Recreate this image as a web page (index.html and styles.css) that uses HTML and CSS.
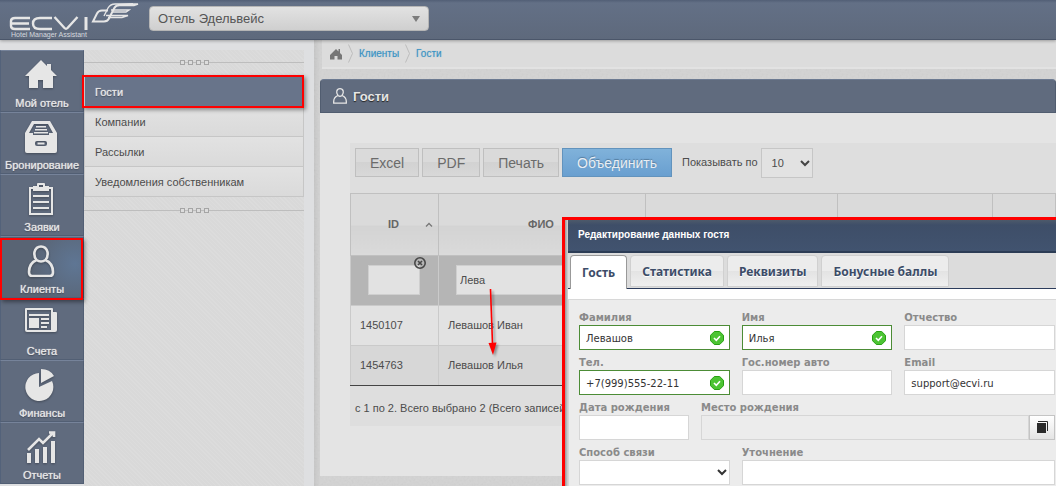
FILE: index.html
```html
<!DOCTYPE html>
<html lang="ru">
<head>
<meta charset="utf-8">
<title>ECVI – Гости</title>
<link rel="stylesheet" href="styles.css">
</head>
<body>
<header class="topbar">
  <a class="logo" href="#" aria-label="ECVI">
    <svg class="logo-mark" width="149" height="31" viewBox="0 0 149 31" fill="none" stroke="#e6e6e6" stroke-width="2.4">
      <path d="M30 18H15Q11 18 11 21V26Q11 29 15 29H30M11 23.500H29"/>
      <path d="M52 18H40Q33 18 33 23.500T40 29H52"/>
      <path d="M54.500 17L64.500 28Q66 29.500 67.500 28L77.500 17" stroke-linejoin="round"/>
      <path d="M86 17V30" stroke-width="3"/>
      <path d="M108 10.500H102Q98.500 10.500 97 13.500L93 21.500H104Q107.500 21.500 109 18.500L114 8.500Q115.500 5.500 119 5L133 4" stroke-width="2"/>
      <path d="M104 16L108 8Q110.500 4 115 4H138L134 5.500H118M111 10H129L126 12H112M106 15.500H128L122 17.500H108" stroke-width="1.400"/>
    </svg>
    <span class="logo-tag">Hotel Manager Assistant</span>
  </a>
  <div class="hotel-picker">
    <select class="hotel-select" aria-label="Отель"><option>Отель Эдельвейс</option></select>
  </div>
</header>

<div class="layout">
  <nav class="rail">
    <a class="rail-item" href="#">
      <svg width="32" height="32" viewBox="0 0 32 32" fill="#e6e6e6"><path d="M16 1L0 17H4V29H13V21H18V29H28V17H32L26 11V5H22V7Z"/></svg>
      <span>Мой отель</span></a>
    <a class="rail-item" href="#">
      <svg width="32" height="32" viewBox="0 0 32 32" fill="#e6e6e6"><path fill-rule="evenodd" d="M7 0H25L32 12V30Q32 32 30 32H2Q0 32 0 30V12ZM9 3L4 12H8V14H24V12H28L23 3ZM12 20Q10 20 10 22V23Q10 25 12 25H20Q22 25 22 23V22Q22 20 20 20ZM12.500 21.500H19.500V23.500H12.500Z"/><path d="M11 5H21V6.500H11ZM10 8H22V9.500H10ZM9 11H23V12.500H9Z"/></svg>
      <span>Бронирование</span></a>
    <a class="rail-item" href="#">
      <svg width="32" height="32" viewBox="0 0 32 32"><path d="M8 5H5V31H27V5H24" fill="none" stroke="#e6e6e6" stroke-width="2"/><path fill="#e6e6e6" fill-rule="evenodd" d="M8 3H12V1Q12 0 13 0H19Q20 0 20 1V3H24V8H8ZM14 2V4H18V2ZM8 12H24V14H8ZM8 18H24V20H8ZM8 24H24V26H8Z"/></svg>
      <span>Заявки</span></a>
    <a class="rail-item rail-item-active" href="#">
      <svg width="32" height="32" viewBox="0 0 32 32" fill="none" stroke="#e6e6e6" stroke-width="2.600"><path d="M11.500 15C9.500 12.500 9 10 9.500 7Q11 1.500 16 1.500T22.500 7C23 10 22.500 12.500 20.500 15M11.500 15Q16 18 20.500 15C25 17 28 21 28 27Q28 31 25 31H7Q4 31 4 27C4 21 7 17 11.500 15"/></svg>
      <span>Клиенты</span></a>
    <a class="rail-item" href="#">
      <svg width="32" height="32" viewBox="0 0 32 32" fill="#e6e6e6"><path fill-rule="evenodd" d="M0 2Q0 1 1 1H27Q28 1 28 2V5H31Q32 5 32 6V23Q32 25 30 25H2Q0 25 0 23ZM2 3V23H26V3ZM4 7H24V9H4ZM4 11H14V21H4ZM16 11H24V13H16ZM16 15H24V17H16ZM16 19H22V21H16Z"/></svg>
      <span>Счета</span></a>
    <a class="rail-item" href="#">
      <svg width="32" height="32" viewBox="0 0 32 32" fill="#e6e6e6"><path d="M14 4V18L27 12A14 14 0 1 1 14 4ZM16 0Q25 0 29 7L16 14Z"/></svg>
      <span>Финансы</span></a>
    <a class="rail-item" href="#">
      <svg width="32" height="32" viewBox="0 0 32 32" fill="#e6e6e6"><path d="M2 22H6V32H2ZM10 18H14V32H10ZM18 16H22V32H18ZM26 10H30V32H26Z"/><path d="M3 19L14 8L18 12L28 2M24 1.500H29V6" fill="none" stroke="#e6e6e6" stroke-width="2.600"/></svg>
      <span>Отчеты</span></a>
  </nav>

  <nav class="submenu">
    <div class="divider"><i></i><i></i><i></i><i></i></div>
    <ul class="sub-list">
      <li class="sub-active"><a href="#">Гости</a></li>
      <li><a href="#">Компании</a></li>
      <li><a href="#">Рассылки</a></li>
      <li><a href="#">Уведомления собственникам</a></li>
    </ul>
    <div class="divider"><i></i><i></i><i></i><i></i></div>
  </nav>

  <main class="content">
    <div class="crumbs">
      <svg width="12" height="12" viewBox="0 0 12 12" fill="#777"><path d="M6 1L0 7V11.500H4.500V8H7.500V11.500H12V7L10 5V1H8.500V3.500Z"/></svg>
      <svg class="crumb-sep" width="5" height="19" viewBox="0 0 5 19" fill="none" stroke="#bdbdbd"><path d="M.5 .5L4.500 9.500L.5 18.500"/></svg>
      <a href="#">Клиенты</a>
      <svg class="crumb-sep" width="5" height="19" viewBox="0 0 5 19" fill="none" stroke="#bdbdbd"><path d="M.5 .5L4.500 9.500L.5 18.500"/></svg>
      <a href="#">Гости</a>
    </div>

    <section class="panel">
      <h1 class="panel-head">
        <svg width="14" height="16" viewBox="0 0 14 16" fill="none" stroke="#e6e6e6" stroke-width="1.300"><path d="M5 7.500C3.500 5.500 3.500 4 3.800 3Q4.500 .7 7 .7T10.200 3C10.500 4 10.500 5.500 9 7.500M5 7.500Q7 9 9 7.500C11.500 8.500 13.300 10.500 13.300 13.500V15.200H.7V13.500C.7 10.500 2.500 8.500 5 7.500"/></svg>
        Гости
      </h1>
      <div class="panel-body">
        <div class="toolbar">
          <button class="btn" type="button">Excel</button>
          <button class="btn" type="button">PDF</button>
          <button class="btn" type="button">Печать</button>
          <button class="btn btn-primary" type="button">Объединить</button>
          <label class="page-label" for="page-size">Показывать по</label>
          <div class="page-size">
            <select id="page-size"><option>10</option></select>
            <svg width="10" height="7" viewBox="0 0 10 7" fill="none" stroke="#444" stroke-width="2"><path d="M1 1L5 5L9 1"/></svg>
          </div>
        </div>
        <table class="guests">
          <colgroup><col class="c-id"><col class="c-name"><col class="c-third"><col class="c-fourth"><col></colgroup>
          <thead>
            <tr>
              <th>ID<svg class="sort" width="8" height="5" viewBox="0 0 8 5" fill="none" stroke="#777" stroke-width="1.300"><path d="M1 4.500L4 1.500L7 4.500"/></svg></th>
              <th>ФИО</th><th></th><th></th><th></th>
            </tr>
            <tr class="filters">
              <td><input class="filter-id" type="text" aria-label="ID"><button class="clear" type="button" aria-label="Очистить"><svg width="12" height="12" viewBox="0 0 12 12" fill="none" stroke="#484848" stroke-width="1.600"><circle cx="6" cy="6" r="5.200"/><path d="M4 4L8 8M8 4L4 8"/></svg></button></td>
              <td><input type="text" value="Лева" aria-label="ФИО"></td><td></td><td></td><td></td>
            </tr>
          </thead>
          <tbody>
            <tr><td>1450107</td><td>Левашов Иван</td><td></td><td></td><td></td></tr>
            <tr><td>1454763</td><td>Левашов Илья</td><td></td><td></td><td></td></tr>
          </tbody>
        </table>
        <p class="info">с 1 по 2. Всего выбрано 2 (Всего записей 2)</p>
      </div>
    </section>
  </main>
</div>

<svg class="arrow" width="16" height="72" viewBox="0 0 16 72"><path d="M5.500 3L7.500 58" stroke="#f00" stroke-width="1.600"/><path d="M3.500 57L11.500 56.500L8 69Z" fill="#f00"/></svg>

<section class="dialog" role="dialog" aria-labelledby="dlg-title">
  <div class="dialog-inner">
    <h2 class="dialog-title" id="dlg-title">Редактирование данных гостя</h2>
    <div class="tabs">
      <button class="tab tab-active" type="button">Гость</button>
      <button class="tab" type="button">Статистика</button>
      <button class="tab" type="button">Реквизиты</button>
      <button class="tab" type="button">Бонусные баллы</button>
    </div>
    <form class="form">
      <div class="row">
        <div class="field valid"><label for="f1">Фамилия</label><input id="f1" type="text" value="Левашов"><svg class="ok" width="14" height="14" viewBox="0 0 14 14"><path d="M4.300 .5H9.700L13.500 4.300V9.700L9.700 13.500H4.300L.5 9.700V4.300Z" fill="#4cc433" stroke="#27a012"/><path d="M4 7L6.300 9.300L10 5.300" fill="none" stroke="#fff" stroke-width="1.600"/></svg></div>
        <div class="field valid"><label for="f2">Имя</label><input id="f2" type="text" value="Илья"><svg class="ok" width="14" height="14" viewBox="0 0 14 14"><path d="M4.300 .5H9.700L13.500 4.300V9.700L9.700 13.500H4.300L.5 9.700V4.300Z" fill="#4cc433" stroke="#27a012"/><path d="M4 7L6.300 9.300L10 5.300" fill="none" stroke="#fff" stroke-width="1.600"/></svg></div>
        <div class="field"><label for="f3">Отчество</label><input id="f3" type="text"></div>
      </div>
      <div class="row">
        <div class="field valid"><label for="f4">Тел.</label><input id="f4" type="text" value="+7(999)555-22-11"><svg class="ok" width="14" height="14" viewBox="0 0 14 14"><path d="M4.300 .5H9.700L13.500 4.300V9.700L9.700 13.500H4.300L.5 9.700V4.300Z" fill="#4cc433" stroke="#27a012"/><path d="M4 7L6.300 9.300L10 5.300" fill="none" stroke="#fff" stroke-width="1.600"/></svg></div>
        <div class="field"><label for="f5">Гос.номер авто</label><input id="f5" type="text"></div>
        <div class="field"><label for="f6">Email</label><input id="f6" type="text" value="support@ecvi.ru"></div>
      </div>
      <div class="row row-birth">
        <div class="field"><label for="f7">Дата рождения</label><input id="f7" type="text"></div>
        <div class="field"><label for="f8">Место рождения</label>
          <div class="with-button"><input id="f8" type="text" readonly><button class="book" type="button" aria-label="Выбрать"><svg width="11" height="12" viewBox="0 0 11 12"><path d="M0 2H9V12H0Z" fill="#2b2b2b"/><path d="M1 .5H10.500V10" fill="none" stroke="#2b2b2b"/></svg></button></div>
        </div>
      </div>
      <div class="row">
        <div class="field"><label for="f9">Способ связи</label><select id="f9"><option></option></select><svg class="chev" width="10" height="7" viewBox="0 0 10 7" fill="none" stroke="#333" stroke-width="2"><path d="M1 1L5 5L9 1"/></svg></div>
        <div class="field wide"><label for="f10">Уточнение</label><input id="f10" type="text"></div>
      </div>
    </form>
  </div>
</section>
</body>
</html>
```
FILE: styles.css
```css
* { box-sizing: border-box; }

body {
  margin: 0;
  height: 100vh;
  overflow: hidden;
  position: relative;
  display: flex;
  flex-direction: column;
  background: #dedfe1;
  color: #4c4c4c;
  font-family: "Liberation Sans", Arial, sans-serif;
  font-size: 11px;
}

a { color: inherit; text-decoration: none; }
input, select, button { font: inherit; color: inherit; margin: 0; border-radius: 0; }
select { appearance: none; }

.topbar {
  flex: none;
  display: flex;
  height: 40px;
  background: linear-gradient(#525f76, #637086 3px, #5e697c);
  border-bottom: 1px solid #4b566a;
  box-shadow: 0 1px 3px rgba(0, 0, 0, .3);
  z-index: 1;
}
.logo { width: 149px; display: flex; flex-direction: column; }
.logo-mark { display: block; }
.logo-tag { padding-left: 11px; font-size: 7px; line-height: 8px; color: #d5d9df; }
.hotel-picker { position: relative; width: 280px; margin-top: 6px; }
.hotel-picker::after {
  content: "";
  position: absolute;
  right: 9px;
  top: 10px;
  border: 4px solid transparent;
  border-top: 6px solid #7c7c7c;
  border-bottom: 0;
}
.hotel-select {
  width: 100%;
  height: 25px;
  padding: 0 8px;
  border: 1px solid #b5b5b5;
  border-radius: 4px;
  background: linear-gradient(#e2e2e2, #cfcfcf);
  font-size: 13px;
  color: #555;
}

.layout { flex: 1; display: flex; min-height: 0; }

.rail { flex: none; width: 84px; margin-top: 10px; }
.rail-item {
  position: relative;
  display: flex;
  flex-direction: column;
  align-items: center;
  height: 62px;
  padding-top: 8px;
  border: 1px solid #525f74;
  border-top-color: #76839a;
  border-left-color: #53627a;
  background: #606b7e;
  color: #e6e6e6;
  line-height: 14px;
  white-space: nowrap;
  text-shadow: 0 0 1px #e6e6e6, 0 1px 1px #333b48;
}
.rail-item svg { flex: none; margin-left: -3px; filter: drop-shadow(0 1px 1px rgba(0, 0, 0, .3)); }
.rail-item span { margin-top: 5px; }
.rail-item-active { background: radial-gradient(circle at 90% 45%, #5f7694, #596474 55%); }
.rail-item-active::after,
.sub-active::after {
  content: "";
  position: absolute;
  border: 2px solid #f00;
  box-shadow: 2px 2px 4px rgba(0, 0, 0, .4);
  z-index: 2;
}
.rail-item-active::after { inset: 1px 0 -3px -1px; }

.submenu {
  flex: none;
  width: 220px;
  margin-top: 10px;
  background: repeating-linear-gradient(45deg, rgba(255, 255, 255, .08) 0 1px, transparent 1px 3px), #d9d9d9;
}
.divider {
  display: flex;
  justify-content: center;
  align-items: center;
  gap: 3px;
  height: 25px;
  background: linear-gradient(#bdbdbd, #bdbdbd) center / 100% 1px no-repeat;
}
.divider i { width: 5px; height: 5px; border: 1px solid #a5a5a5; background: #ddd; }
.sub-list { list-style: none; margin: 1px 0; padding: 0; border: 1px solid #c6c6c6; border-width: 1px 1px 0; }
.sub-list li {
  position: relative;
  height: 30px;
  padding-left: 10px;
  border-bottom: 1px solid #c6c6c6;
  background: linear-gradient(#e2e2e2, #dadada);
  line-height: 30px;
}
.sub-list .sub-active { background: #68748a; color: #e6e6e6; text-shadow: 0 0 1px #e6e6e6, 0 1px 1px #333b48; }
.sub-active::after { inset: -2px -1px -2px -3px; }

.content {
  flex: 1;
  min-width: 0;
  margin-left: 10px;
  padding-left: 6px;
  background: linear-gradient(90deg, rgba(0, 0, 0, .06), transparent 6px), url("data:image/svg+xml,%3Csvg xmlns='http://www.w3.org/2000/svg' width='80' height='80'%3E%3Cfilter id='n'%3E%3CfeTurbulence type='fractalNoise' baseFrequency='.5' numOctaves='2' stitchTiles='stitch'/%3E%3CfeColorMatrix type='saturate' values='0'/%3E%3C/filter%3E%3Crect width='80' height='80' filter='url(%23n)' opacity='.12'/%3E%3C/svg%3E"), #d3d3d3;
}
.crumbs {
  display: flex;
  align-items: center;
  height: 29px;
  margin-left: 2px;
  padding: 0 8px 0;
  background: #dcdcdc;
  border-bottom: 2px solid #e2e2e2;
  color: #3a93c4;
  font-size: 10px;
  text-shadow: 0 0 1px rgba(58, 147, 196, .5);
}
.crumb-sep { margin: 0 6px; }
.panel { margin-top: 10px; }
.panel-head {
  display: flex;
  align-items: center;
  gap: 6px;
  height: 34px;
  margin: 0;
  padding-left: 12px;
  border: 1px solid #515d70;
  border-top-color: #6c7a91;
  border-radius: 4px 4px 0 0;
  background: #606b7e;
  color: #e6e6e6;
  font-size: 13px;
  text-shadow: 0 1px 1px #222;
}
.panel-body { height: 363px; padding: 30px 0 0 30px; background: #e4e4e4; }
.toolbar {
  display: flex;
  align-items: flex-start;
  gap: 3px;
  height: 50px;
  padding: 5px;
  background: #dedede;
}
.btn {
  flex: none;
  height: 29px;
  padding: 0 14px;
  border: 1px solid #bfbfbf;
  background: linear-gradient(#dadada 50%, #d2d2d2 50%, #d8d8d8);
  color: #6b6b6b;
  font-size: 14px;
}
.btn-primary {
  border-color: #6293bd;
  background: linear-gradient(#80b2da, #699fd0);
  color: #e8eef4;
  text-shadow: 0 -1px 1px #557c9e;
}
.page-label { padding: 0 0 0 7px; line-height: 29px; white-space: nowrap; }
.page-size { position: relative; flex: none; }
.page-size select {
  width: 52px;
  height: 30px;
  padding: 0 10px;
  border: 1px solid #c6c6c6;
  background: #e2e2e2;
}
.page-size svg { position: absolute; right: 3px; top: 12px; }

.guests { width: 100%; border-collapse: collapse; table-layout: fixed; border-left: 1px solid #c4c4c4; }
.c-id { width: 88px; }
.c-name { width: 207px; }
.c-third { width: 192px; }
.c-fourth { width: 155px; }
.guests th {
  position: relative;
  height: 62px;
  padding: 0 2px 2px 0;
  border: 1px solid #c0c0c0;
  background: linear-gradient(#dadada 50%, #d3d3d3 50%, #dadada);
  color: #666;
}
.sort { position: absolute; right: 5px; top: 28px; }
.guests td { height: 40px; padding: 0 9px 2px; border: 1px solid #cacaca; background: #e2e2e2; }
.guests .filters td { position: relative; height: 50px; padding: 0 17px 2px; background: #b5b5b5; }
.filters input {
  display: block;
  width: 100%;
  height: 30px;
  padding: 0 3px;
  border: 1px solid #cfcfcf;
  background: #e2e2e2;
}
.filters .filter-id { width: 52px; }
.clear { position: absolute; right: 12px; top: 1px; padding: 0; border: 0; background: none; line-height: 0; }
.guests tbody tr:last-child td { background: #d7d7d7; border-bottom: 1px solid #444; }
.info { height: 40px; margin: 0; padding-left: 5px; background: #dedede; line-height: 44px; }

.arrow { position: absolute; left: 485px; top: 286px; filter: drop-shadow(2px 2px 1px rgba(0, 0, 0, .35)); }

.dialog {
  position: absolute;
  left: 562px;
  top: 217px;
  right: 0;
  bottom: 0;
  overflow: hidden;
  z-index: 3;
  padding-left: 3px;
  border: solid #f00;
  border-width: 3px 0 0 3px;
  background: linear-gradient(90deg, #999, #d6d6d6 3px);
}
.dialog-inner { background: #fff; font-family: "DejaVu Sans", Verdana, sans-serif; font-size: 10px; }
.dialog-title {
  height: 33px;
  margin: 0;
  padding-left: 10px;
  border-bottom: 2px solid #2c3c55;
  background: linear-gradient(#4d5a6b, #3e4e68 5px, #41536f);
  color: #fff;
  font: bold 10px/30px "Liberation Sans", Arial, sans-serif;
}
.tabs {
  display: flex;
  gap: 3px;
  height: 36px;
  padding: 2px 2px 0;
  border-bottom: 1px solid #2c3c5c;
  background: #dcdcdc;
}
.tab {
  height: 32px;
  padding: 0 11px;
  border: 1px solid #d0d0d0;
  border-radius: 4px 4px 0 0;
  background: linear-gradient(#ececec 50%, #e3e3e3 50%, #efefef);
  color: #3c4c68;
  font: bold 12px "Noto Sans", sans-serif;
  text-shadow: 0 1px 0 #fff;
  white-space: nowrap;
}
.tab-active { height: 34px; border-color: #999; border-bottom: 0; background: #fff; }
.form {
  display: flex;
  flex-direction: column;
  gap: 6px;
  margin-top: 10px;
  padding: 11px 1px 1px 10px;
  border: 1px solid #d8d8d8;
  border-right: 0;
  background: #ececec;
}
.row { display: grid; grid-template-columns: repeat(3, 1fr); column-gap: 12px; }
.row-birth { grid-template-columns: 110px 1fr; }
.wide { grid-column: span 2; }
.field { position: relative; min-width: 0; }
.field label { display: block; line-height: 14px; color: #8a8a8a; font-weight: bold; }
.field input,
.field select {
  display: block;
  width: 100%;
  height: 25px;
  padding: 2px 6px 0;
  border: 1px solid #d6d6d6;
  background: #fff;
  color: #333;
}
.valid input { border-color: #4c8c36; }
.ok { position: absolute; right: 6px; top: 20px; }
.chev { position: absolute; right: 3px; top: 23px; }
.with-button { display: flex; }
.field .with-button input { background: #ececec; }
.book {
  flex: none;
  width: 26px;
  height: 25px;
  padding: 0;
  border: 1px solid #c4c4c4;
  background: linear-gradient(#fff, #e4e4e4);
}
```
